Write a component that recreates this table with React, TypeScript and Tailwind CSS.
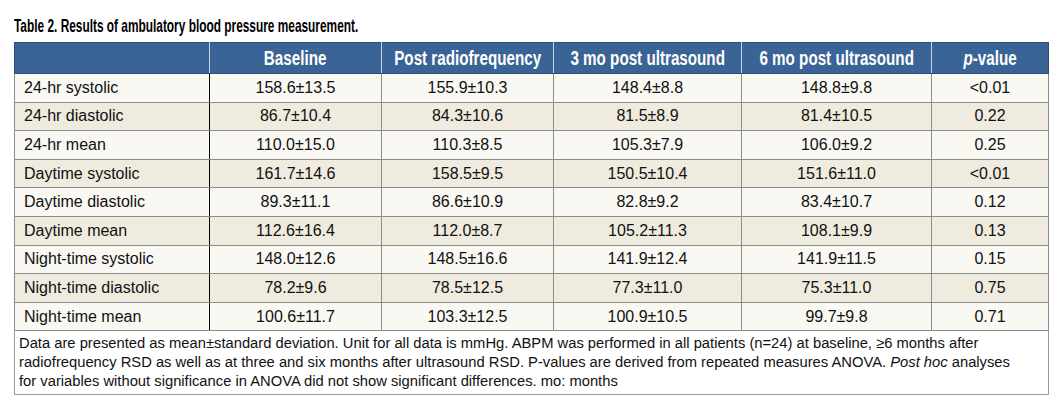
import React from "react";

const rows: [string, string, string, string, string, string][] = [
  ["24-hr systolic", "158.6±13.5", "155.9±10.3", "148.4±8.8", "148.8±9.8", "<0.01"],
  ["24-hr diastolic", "86.7±10.4", "84.3±10.6", "81.5±8.9", "81.4±10.5", "0.22"],
  ["24-hr mean", "110.0±15.0", "110.3±8.5", "105.3±7.9", "106.0±9.2", "0.25"],
  ["Daytime systolic", "161.7±14.6", "158.5±9.5", "150.5±10.4", "151.6±11.0", "<0.01"],
  ["Daytime diastolic", "89.3±11.1", "86.6±10.9", "82.8±9.2", "83.4±10.7", "0.12"],
  ["Daytime mean", "112.6±16.4", "112.0±8.7", "105.2±11.3", "108.1±9.9", "0.13"],
  ["Night-time systolic", "148.0±12.6", "148.5±16.6", "141.9±12.4", "141.9±11.5", "0.15"],
  ["Night-time diastolic", "78.2±9.6", "78.5±12.5", "77.3±11.0", "75.3±11.0", "0.75"],
  ["Night-time mean", "100.6±11.7", "103.3±12.5", "100.9±10.5", "99.7±9.8", "0.71"],
];

const widths = ["w-[195px]", "w-[172px]", "w-[172px]", "w-[188px]", "w-[190px]", "w-[117px]"];

function H({ children }: { children: React.ReactNode }) {
  return (
    <div className="flex justify-center">
      <span className="inline-block shrink-0 origin-center scale-x-[0.76] whitespace-nowrap">{children}</span>
    </div>
  );
}

export default function App() {
  return (
    <div className="w-[1059px] h-[407px] bg-white pt-[15px] pl-[14px]" style={{ fontFamily: '"Liberation Sans", Arial, sans-serif' }}>
      <div className="h-[27px] leading-[22px] text-[19px] font-bold text-black">
        <span className="inline-block origin-left scale-x-[0.625] whitespace-nowrap">
          Table 2. Results of ambulatory blood pressure measurement.
        </span>
      </div>
      <table className="border-collapse w-[1034px] table-fixed">
        <colgroup>
          {widths.map((w, i) => (
            <col key={i} className={w} />
          ))}
        </colgroup>
        <thead>
          <tr className="h-[31px] bg-[#3b6496] text-white text-[20px] font-bold">
            <th className="border border-[#2e4e78] border-r-[#c9d4e3] p-0"></th>
            <th className="border border-[#2e4e78] border-x-[#c9d4e3] p-0 text-center"><H>Baseline</H></th>
            <th className="border border-[#2e4e78] border-x-[#c9d4e3] p-0 text-center"><H>Post radiofrequency</H></th>
            <th className="border border-[#2e4e78] border-x-[#c9d4e3] p-0 text-center"><H>3 mo post ultrasound</H></th>
            <th className="border border-[#2e4e78] border-x-[#c9d4e3] p-0 text-center"><H>6 mo post ultrasound</H></th>
            <th className="border border-[#2e4e78] border-l-[#c9d4e3] p-0 text-center"><H><i>p</i>-value</H></th>
          </tr>
        </thead>
        <tbody className="text-[16px] text-[#111]">
          {rows.map((r, i) => (
            <tr key={i} className={`h-[28.6px] ${i % 2 === 0 ? "bg-[#f9f8f3]" : "bg-[#efebdf]"}`}>
              {r.map((c, j) => (
                <td
                  key={j}
                  className={`border border-[#8c8c8c] p-0 leading-none ${j === 0 ? "text-left pl-[9px] border-r-black" : "text-center"}`}
                >
                  {c}
                </td>
              ))}
            </tr>
          ))}
          <tr>
            <td colSpan={6} className="border border-[#9a9a9a] bg-white pl-[4px] pt-[3px] pb-[3px] text-[14.75px] leading-[19px] text-[#111]">
              Data are presented as mean±standard deviation. Unit for all data is mmHg. ABPM was performed in all patients (n=24) at baseline, ≥6 months after
              <br />
              radiofrequency RSD as well as at three and six months after ultrasound RSD. P-values are derived from repeated measures ANOVA. <i>Post hoc</i> analyses
              <br />
              for variables without significance in ANOVA did not show significant differences. mo: months
            </td>
          </tr>
        </tbody>
      </table>
    </div>
  );
}
